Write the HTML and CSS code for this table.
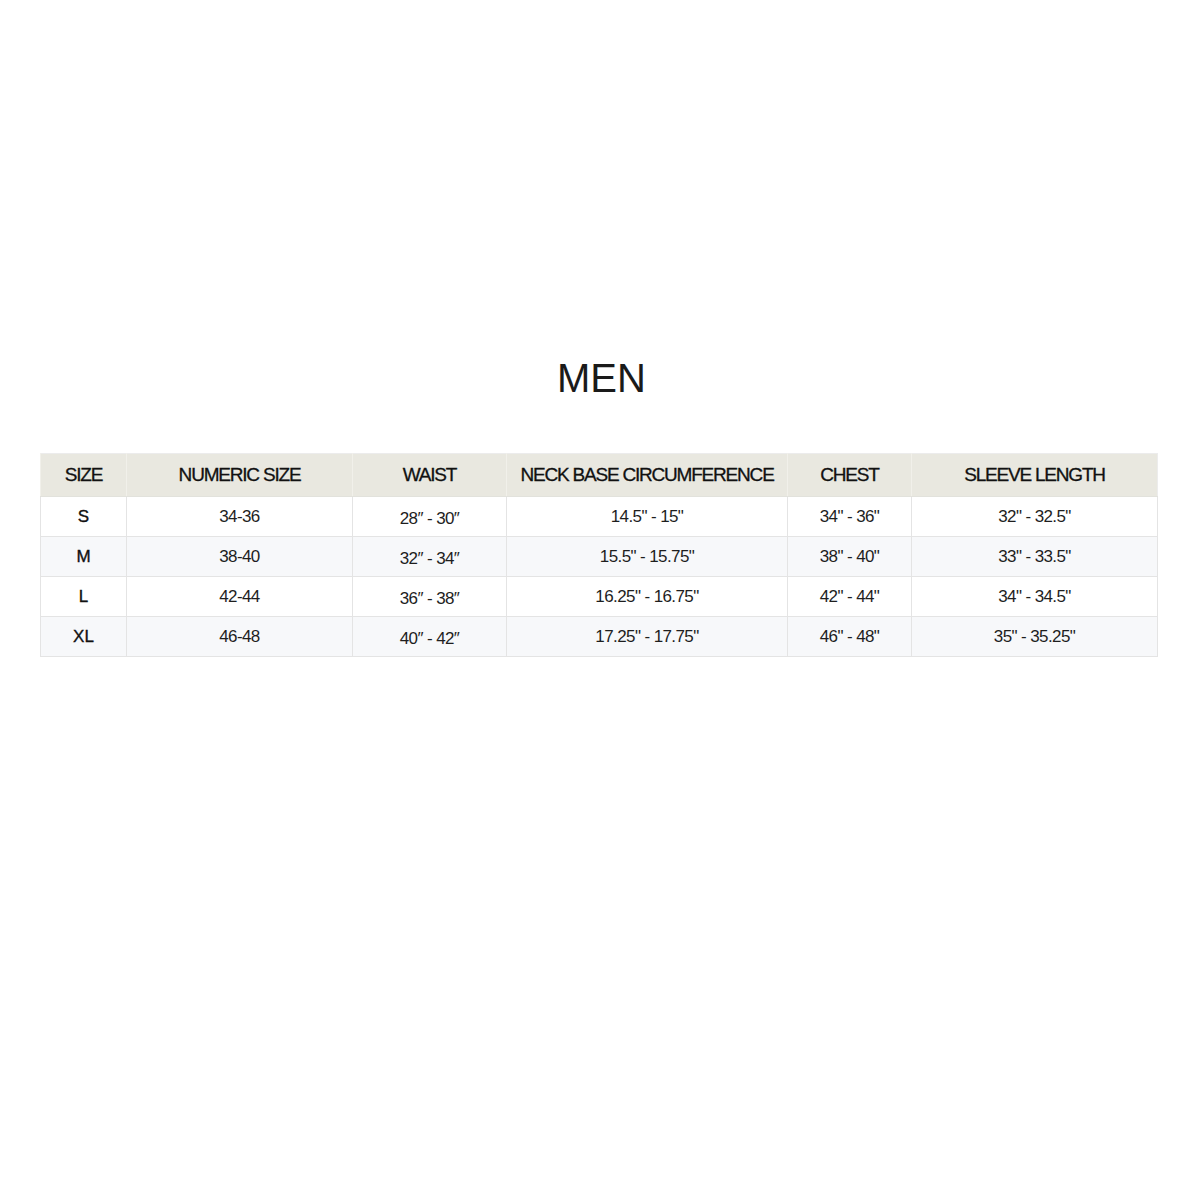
FILE: index.html
```html
<!DOCTYPE html>
<html lang="en">
<head>
<meta charset="utf-8">
<title>Men Size Chart</title>
<link rel="stylesheet" href="styles.css">
</head>
<body>
<main class="page">
  <h1 class="title">MEN</h1>
  <table class="chart">
    <colgroup>
      <col class="c1"><col class="c2"><col class="c3"><col class="c4"><col class="c5"><col class="c6">
    </colgroup>
    <thead>
      <tr>
        <th>SIZE</th>
        <th>NUMERIC SIZE</th>
        <th>WAIST</th>
        <th>NECK BASE CIRCUMFERENCE</th>
        <th>CHEST</th>
        <th>SLEEVE LENGTH</th>
      </tr>
    </thead>
    <tbody>
      <tr>
        <td class="size">S</td><td>34-36</td><td><span class="waist">28″ - 30″</span></td><td>14.5" - 15"</td><td>34" - 36"</td><td>32" - 32.5"</td>
      </tr>
      <tr>
        <td class="size">M</td><td>38-40</td><td><span class="waist">32″ - 34″</span></td><td>15.5" - 15.75"</td><td>38" - 40"</td><td>33" - 33.5"</td>
      </tr>
      <tr>
        <td class="size">L</td><td>42-44</td><td><span class="waist">36″ - 38″</span></td><td>16.25" - 16.75"</td><td>42" - 44"</td><td>34" - 34.5"</td>
      </tr>
      <tr>
        <td class="size">XL</td><td>46-48</td><td><span class="waist">40″ - 42″</span></td><td>17.25" - 17.75"</td><td>46" - 48"</td><td>35" - 35.25"</td>
      </tr>
    </tbody>
  </table>
</main>
</body>
</html>
```

FILE: styles.css
```css
html, body {
  margin: 0;
  padding: 0;
  background: #ffffff;
}

.page {
  padding: 354px 43px 0 40px;
  font-family: "Liberation Sans", Arial, sans-serif;
  color: #1c1c1c;
}

.title {
  margin: 0 0 51px 0;
  font-size: 40px;
  line-height: 48px;
  font-weight: normal;
  text-align: center;
  color: #1a1a1a;
  padding-left: 6px;
}

.chart {
  width: 1117px;
  border-collapse: collapse;
  table-layout: fixed;
  border: 1px solid #ececec;
}

.c1 { width: 86px; }
.c2 { width: 226px; }
.c3 { width: 154px; }
.c4 { width: 281px; }
.c5 { width: 124px; }
.c6 { width: 246px; }

.chart th {
  height: 42px;
  padding: 0;
  background: #e9e8e0;
  font-size: 19px;
  font-weight: normal;
  letter-spacing: -1.2px;
  text-align: center;
  vertical-align: middle;
  color: #111111;
  -webkit-text-stroke: 0.3px #111111;
  border-left: 1px solid #f1f0ea;
  border-bottom: 1px solid #e2e2dc;
}

.chart td {
  height: 39px;
  padding: 0;
  text-align: center;
  vertical-align: middle;
  font-size: 17px;
  line-height: 20px;
  letter-spacing: -0.6px;
  color: #1e1e1e;
  border: 1px solid #e4e4e4;
}

.chart tbody tr:nth-child(even) td {
  background: #f7f8fa;
}

.chart td.size {
  letter-spacing: 0;
  color: #111111;
  -webkit-text-stroke: 0.35px #111111;
}

.waist {
  display: inline-block;
  padding-top: 5px;
}
```
